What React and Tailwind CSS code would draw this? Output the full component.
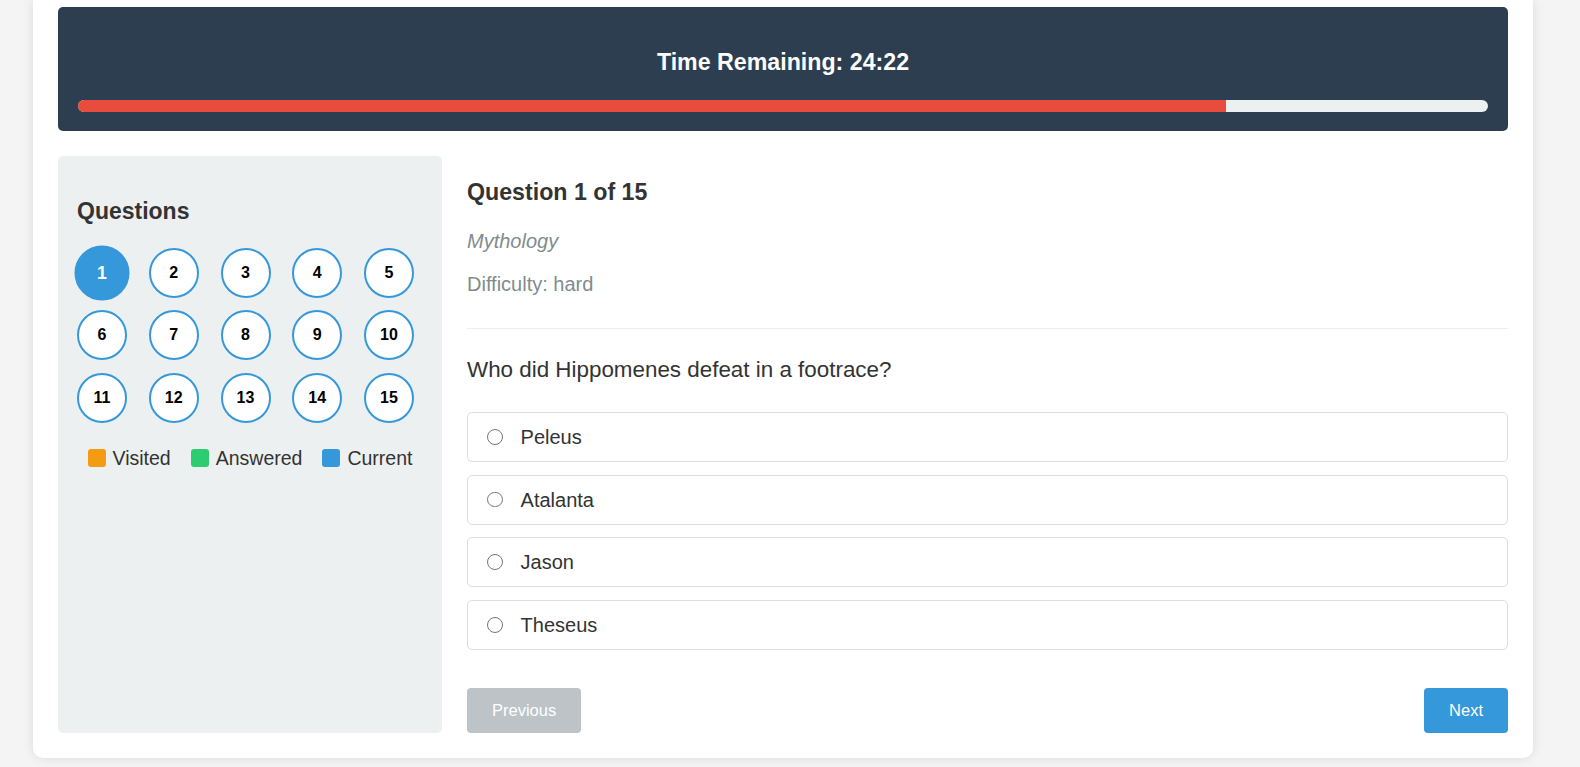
import React from "react";

const options = ["Peleus", "Atalanta", "Jason", "Theseus"];

function Legend({ color, label }) {
  return (
    <div className="flex items-center gap-[7px]">
      <span className={`w-[18px] h-[18px] rounded-[3px] ${color}`} />
      <span className="text-[19.5px] leading-[24px] text-[#333]">{label}</span>
    </div>
  );
}

export default function App() {
  const questions = Array.from({ length: 15 }, (_, i) => i + 1);

  return (
    <div className="min-h-screen bg-[#f4f4f4] font-['Liberation_Sans',Arial,sans-serif]">
      <div className="ml-[33px] w-[1500px] bg-white rounded-b-[10px] shadow-[0_0_12px_rgba(0,0,0,0.1)] px-[25px] pt-[7px] pb-[25px]">
        {/* timer */}
        <div className="bg-[#2c3e50] rounded-[5px] px-5 pt-[42px] pb-[19px]">
          <h2 className="text-center text-white font-bold text-[23.2px] leading-[27px]">
            Time Remaining: 24:22
          </h2>
          <div className="mt-[24px] h-[12px] rounded-full bg-[#ecf0f1] overflow-hidden">
            <div className="h-full w-[81.4%] bg-[#e74c3c]" />
          </div>
        </div>

        <div className="flex gap-[25px] mt-[25px]">
          {/* sidebar */}
          <aside className="w-[384px] shrink-0 bg-[#ecf0f1] rounded-[5px] pt-[42px] px-[19px]">
            <h3 className="font-bold text-[23px] leading-[27px] text-[#333]">Questions</h3>
            <div className="mt-[23px] grid grid-cols-[repeat(5,50px)] gap-x-[21.75px] gap-y-[12.25px]">
              {questions.map((n) =>
                n === 1 ? (
                  <button
                    key={n}
                    className="w-[50px] h-[50px] rounded-full bg-[#3498db] border-2 border-[#3498db] text-white font-bold text-[16px] scale-110 flex items-center justify-center"
                  >
                    {n}
                  </button>
                ) : (
                  <button
                    key={n}
                    className="w-[50px] h-[50px] rounded-full bg-white border-2 border-[#3498db] text-black font-bold text-[16px] flex items-center justify-center"
                  >
                    {n}
                  </button>
                )
              )}
            </div>
            <div className="mt-[23px] flex justify-center gap-[20px]">
              <Legend color="bg-[#f39c12]" label="Visited" />
              <Legend color="bg-[#2ecc71]" label="Answered" />
              <Legend color="bg-[#3498db]" label="Current" />
            </div>
          </aside>

          {/* question */}
          <main className="flex-1 flex flex-col pt-[23px]">
            <h3 className="font-bold text-[23.2px] leading-[27px] text-[#333]">Question 1 of 15</h3>
            <p className="mt-[23.4px] italic text-[20px] leading-[24px] text-[#7f8c8d]">Mythology</p>
            <p className="mt-[18.6px] text-[20px] leading-[24px] text-[#7f8c8d]">Difficulty: hard</p>
            <div className="mt-[32px] border-t border-[#eee]" />
            <p className="mt-[27px] text-[22.4px] leading-[27px] text-[#333]">
              Who did Hippomenes defeat in a footrace?
            </p>
            <div className="mt-[29px] flex flex-col gap-[12.6px]">
              {options.map((o) => (
                <label
                  key={o}
                  className="h-[50px] flex items-center border border-[#ddd] rounded-[5px] pl-[19px] bg-white"
                >
                  <span className="w-[15.6px] h-[15.6px] rounded-full border-[1.2px] border-[#767676] bg-white" />
                  <span className="ml-[18px] text-[20px] leading-[24px] text-[#333]">{o}</span>
                </label>
              ))}
            </div>
            <div className="mt-[38px] flex justify-between">
              <button className="h-[45px] px-[25px] rounded-[4px] bg-[#bdc3c7] text-white text-[16.5px]">
                Previous
              </button>
              <button className="h-[45px] px-[25px] rounded-[4px] bg-[#3498db] text-white text-[16.5px]">
                Next
              </button>
            </div>
          </main>
        </div>
      </div>
    </div>
  );
}
